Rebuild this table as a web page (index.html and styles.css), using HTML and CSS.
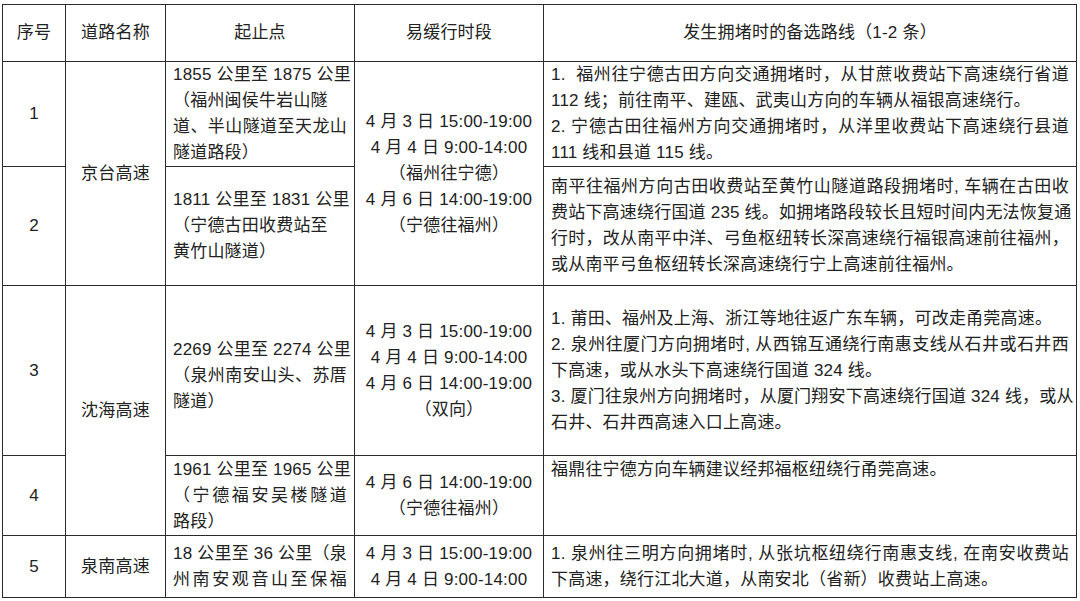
FILE: index.html
```html
<!DOCTYPE html>
<html lang="zh-CN">
<head>
<meta charset="utf-8">
<title>易缓行路段</title>
<link rel="stylesheet" href="styles.css">
</head>
<body>
<table class="tbl">
  <colgroup>
    <col class="c1"><col class="c2"><col class="c3"><col class="c4"><col class="c5">
  </colgroup>
  <thead>
    <tr class="r-head">
      <th>序号</th>
      <th>道路名称</th>
      <th>起止点</th>
      <th>易缓行时段</th>
      <th>发生拥堵时的备选路线（1-2 条）</th>
    </tr>
  </thead>
  <tbody>
    <tr class="r1">
      <td class="num">1</td>
      <td class="road" rowspan="2">京台高速</td>
      <td class="seg"><span class="j">1855 公里至 1875 公里</span><span class="l">（福州闽侯牛岩山隧</span><span class="j">道、半山隧道至天龙山</span><span class="l">隧道路段）</span></td>
      <td class="time" rowspan="2">4 月 3 日 15:00-19:00<br>4 月 4 日 9:00-14:00<br>（福州往宁德）<br>4 月 6 日 14:00-19:00<br>（宁德往福州）</td>
      <td class="alt"><span class="j">1.&nbsp; 福州往宁德古田方向交通拥堵时，从甘蔗收费站下高速绕行省道</span><span class="l">112 线；前往南平、建瓯、武夷山方向的车辆从福银高速绕行。</span><span class="j">2. 宁德古田往福州方向交通拥堵时，从洋里收费站下高速绕行县道</span><span class="l">111 线和县道 115 线。</span></td>
    </tr>
    <tr class="r2">
      <td class="num">2</td>
      <td class="seg"><span class="j">1811 公里至 1831 公里</span><span class="l">（宁德古田收费站至</span><span class="l">黄竹山隧道）</span></td>
      <td class="alt"><span class="j">南平往福州方向古田收费站至黄竹山隧道路段拥堵时, 车辆在古田收</span><span class="j">费站下高速绕行国道 235 线。如拥堵路段较长且短时间内无法恢复通</span><span class="j">行时，改从南平中洋、弓鱼枢纽转长深高速绕行福银高速前往福州，</span><span class="l">或从南平弓鱼枢纽转长深高速绕行宁上高速前往福州。</span></td>
    </tr>
    <tr class="r3">
      <td class="num">3</td>
      <td class="road" rowspan="2">沈海高速</td>
      <td class="seg low"><span class="j">2269 公里至 2274 公里</span><span class="j">（泉州南安山头、苏厝</span><span class="l">隧道）</span></td>
      <td class="time">4 月 3 日 15:00-19:00<br>4 月 4 日 9:00-14:00<br>4 月 6 日 14:00-19:00<br>（双向）</td>
      <td class="alt"><span class="l">1. 莆田、福州及上海、浙江等地往返广东车辆，可改走甬莞高速。</span><span class="j">2. 泉州往厦门方向拥堵时, 从西锦互通绕行南惠支线从石井或石井西</span><span class="l">下高速，或从水头下高速绕行国道 324 线。</span><span class="j">3. 厦门往泉州方向拥堵时，从厦门翔安下高速绕行国道 324 线，或从</span><span class="l">石井、石井西高速入口上高速。</span></td>
    </tr>
    <tr class="r4">
      <td class="num">4</td>
      <td class="seg"><span class="j">1961 公里至 1965 公里</span><span class="j">（宁德福安吴楼隧道</span><span class="l">路段）</span></td>
      <td class="time">4 月 6 日 14:00-19:00<br>（宁德往福州）</td>
      <td class="alt top"><span class="l">福鼎往宁德方向车辆建议经邦福枢纽绕行甬莞高速。</span></td>
    </tr>
    <tr class="r5">
      <td class="num">5</td>
      <td class="road">泉南高速</td>
      <td class="seg"><span class="j">18 公里至 36 公里（泉</span><span class="j">州南安观音山至保福</span></td>
      <td class="time">4 月 3 日 15:00-19:00<br>4 月 4 日 9:00-14:00</td>
      <td class="alt"><span class="j">1. 泉州往三明方向拥堵时, 从张坑枢纽绕行南惠支线, 在南安收费站</span><span class="l">下高速，绕行江北大道，从南安北（省新）收费站上高速。</span></td>
    </tr>
  </tbody>
</table>
</body>
</html>
```

FILE: styles.css
```css
html, body {
  margin: 0;
  background: #ffffff;
}

body {
  padding: 4px 4px 0 2px;
  font-family: "Liberation Sans", "Noto Sans CJK SC", sans-serif;
  font-size: 17px;
  color: #222222;
}

.tbl {
  border-collapse: collapse;
  table-layout: fixed;
  width: 1074px;
}

.c1 { width: 63px; }
.c2 { width: 100px; }
.c3 { width: 189px; }
.c4 { width: 189px; }
.c5 { width: 533px; }

.tbl th,
.tbl td {
  border: 1px solid #2b2b2b;
  padding: 0 7px;
  line-height: 26px;
  vertical-align: middle;
  letter-spacing: 0.2px;
  overflow: hidden;
}

.tbl th {
  font-weight: normal;
  text-align: center;
}

.r-head { height: 57px; }
.r1 { height: 105px; }
.r2 { height: 119px; }
.r3 { height: 170px; }
.r4 { height: 80px; }
.r5 { height: 62px; }

.num,
.road,
.time {
  text-align: center;
}

.time {
  padding: 0 4px;
  letter-spacing: 0.6px;
}

.seg { padding: 0 8px 0 7px; }

.seg.low { padding-top: 10px; }

.alt { padding: 0 6px 0 9px; }

.alt.top {
  vertical-align: top;
  padding-top: 1px;
}

.j {
  display: block;
  text-align: justify;
  text-align-last: justify;
  white-space: nowrap;
}

.l {
  display: block;
  text-align: left;
  white-space: nowrap;
}
```
